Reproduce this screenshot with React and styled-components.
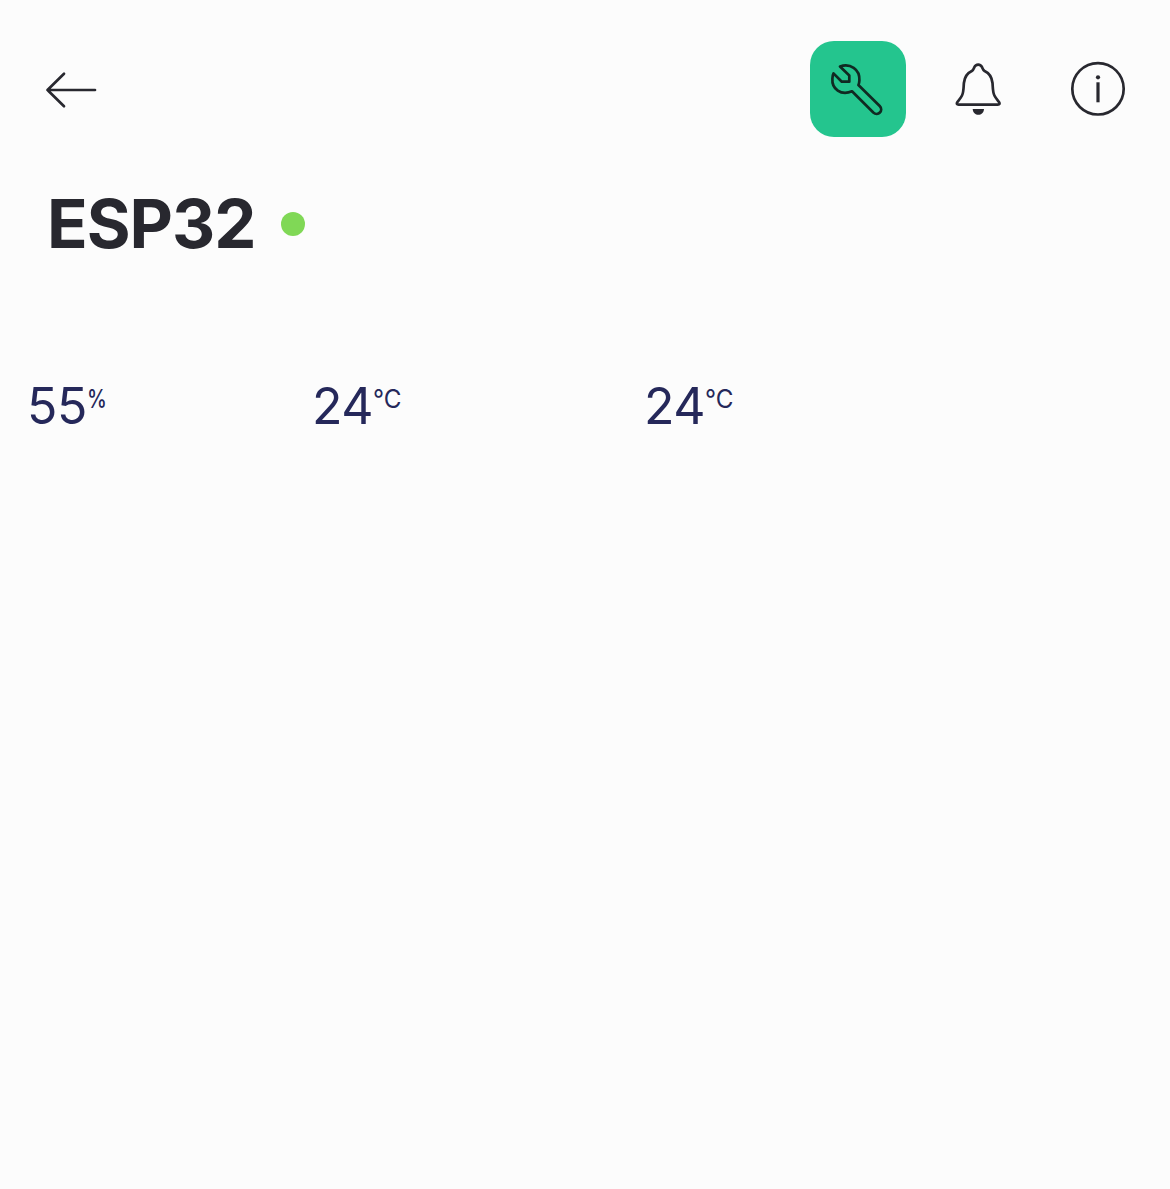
import React from "react";
import styled, { createGlobalStyle } from "styled-components";

const GlobalStyle = createGlobalStyle`
  * { box-sizing: border-box; }
  body { margin: 0; background: #fcfcfc; }
`;

const Screen = styled.main`
  width: 1170px;
  height: 1189px;
  overflow: hidden;
  background: #fcfcfc;
  color: #28282f;
  font-family: Inter, "Liberation Sans", sans-serif;
`;

const Toolbar = styled.header`
  display: flex;
  align-items: center;
  justify-content: space-between;
  padding: 41px 24px 0;
`;

const Actions = styled.div`
  display: flex;
  gap: 24px;
`;

const IconButton = styled.button`
  display: block;
  width: 96px;
  height: 96px;
  padding: 0;
  border: 0;
  border-radius: 24px;
  color: ${(p) => (p.$active ? "#102a22" : "#28282f")};
  background: ${(p) => (p.$active ? "#24c58e" : "transparent")};
`;

const Icon = styled.svg`
  display: block;
  width: 96px;
  height: 96px;
  fill: none;
  stroke: currentColor;
  stroke-width: 2.7;
  stroke-linecap: round;
  stroke-linejoin: round;
`;

const Heading = styled.div`
  display: flex;
  align-items: center;
  gap: 26px;
  height: 80px;
  margin-top: 47px;
  padding-left: 46px;
`;

const Title = styled.h1`
  width: 209px;
  margin: 0;
  font-size: 67px;
  font-weight: 700;
  line-height: 80px;
  letter-spacing: -1px;
  text-indent: 1px;
  white-space: nowrap;
`;

const StatusDot = styled.span`
  width: 24px;
  height: 24px;
  border-radius: 50%;
  background: #80d856;
`;

const Readings = styled.section`
  display: grid;
  grid-template-columns: 285px 332px 1fr;
  margin-top: 112px;
  padding-left: 27px;
  color: #25285a;
`;

const Reading = styled.div`
  display: flex;
  align-items: flex-start;
  height: 60px;
`;

const Value = styled.span`
  font-size: 50px;
  line-height: 61px;
  letter-spacing: -0.5px;
`;

const Unit = styled.span`
  margin-top: 8px;
  font-size: 25px;
  font-weight: ${(p) => p.$weight};
  line-height: 30px;
  transform: scaleX(${(p) => p.$stretch});
  transform-origin: left;
`;

const readings = [
  { value: "55", unit: "%", weight: 500, stretch: 0.8 },
  { value: "24", unit: "°C", weight: 400, stretch: 0.97 },
  { value: "24", unit: "°C", weight: 400, stretch: 0.97 },
];

export default function App() {
  return (
    <Screen>
      <GlobalStyle />
      <Toolbar>
        <IconButton aria-label="Back">
          <Icon viewBox="0 0 96 96">
            <path d="M71 49H23.5M40 32.8L23.5 49L40 65.3" />
          </Icon>
        </IconButton>
        <Actions>
          <IconButton $active aria-label="Settings">
            <Icon viewBox="0 0 96 96">
              <path d="M30 25.5C40 22 50 28 49.4 39.5C49.3 41.3 49 42.8 48.4 44L69.7 65C74 69.5 68 75.8 63.3 71.5L42 50.3C31 55 21.6 48 22.4 37.5C22.5 35.5 22.8 33.8 23.5 32.4L31.8 40.7H39.3V34.5Z" />
            </Icon>
          </IconButton>
          <IconButton aria-label="Notifications">
            <Icon viewBox="0 0 96 96">
              <path d="M48.2 23.6C46.2 23.6 45 24.7 44.3 26.3C43.6 28 43.2 29.2 41.8 30C37.5 32 34.5 36 33.9 42C33.5 46 33.8 51 32 54.5C30.8 57 28.8 59.2 27.4 61C26.2 62.7 26.9 63.7 28.6 63.7H67.8C69.5 63.7 70.2 62.7 69 61C67.6 59.2 65.6 57 64.4 54.5C62.6 51 62.9 46 62.5 42C61.9 36 58.9 32 54.6 30C53.2 29.2 52.8 28 52.1 26.3C51.4 24.7 50.2 23.6 48.2 23.6Z" />
              <path d="M42.7 68H54C53.8 75.7 42.9 75.7 42.7 68Z" fill="currentColor" stroke="none" />
            </Icon>
          </IconButton>
          <IconButton aria-label="Information">
            <Icon viewBox="0 0 96 96">
              <circle cx="48" cy="47.8" r="25.7" />
              <circle cx="48" cy="36.3" r="2.1" fill="currentColor" stroke="none" />
              <path d="M48 41.3V61.3" strokeLinecap="butt" style={{ strokeWidth: 3.2, strokeLinecap: "butt" }} />
            </Icon>
          </IconButton>
        </Actions>
      </Toolbar>
      <Heading>
        <Title>ESP32</Title>
        <StatusDot />
      </Heading>
      <Readings>
        {readings.map((reading, index) => (
          <Reading key={index}>
            <Value>{reading.value}</Value>
            <Unit $weight={reading.weight} $stretch={reading.stretch}>{reading.unit}</Unit>
          </Reading>
        ))}
      </Readings>
    </Screen>
  );
}
